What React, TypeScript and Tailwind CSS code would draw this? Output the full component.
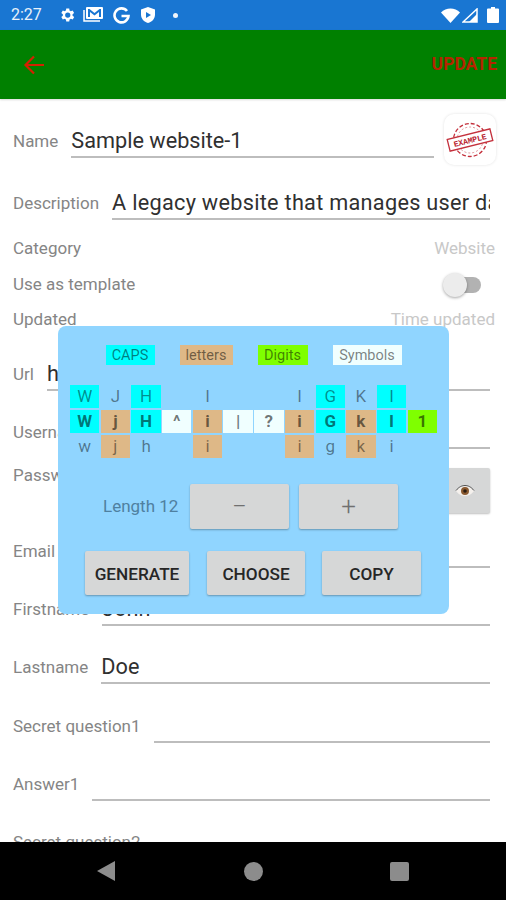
import { ReactNode } from 'react';

type CellKind = 'caps' | 'lower' | 'symbol' | 'digit' | 'none';

const cellBg: Record<CellKind, string> = {
  caps: 'bg-[#00ffff]',
  lower: 'bg-[#deb887]',
  symbol: 'bg-[#f0ffff]',
  digit: 'bg-[#7fff00]',
  none: '',
};

const topRow: [string, CellKind][] = [
  ['W', 'caps'], ['J', 'none'], ['H', 'caps'], ['', 'none'], ['I', 'none'], ['', 'none'],
  ['', 'none'], ['I', 'none'], ['G', 'caps'], ['K', 'none'], ['I', 'caps'], ['', 'none'],
];
const midRow: [string, CellKind][] = [
  ['W', 'caps'], ['j', 'lower'], ['H', 'caps'], ['^', 'symbol'], ['i', 'lower'], ['|', 'symbol'],
  ['?', 'symbol'], ['i', 'lower'], ['G', 'caps'], ['k', 'lower'], ['I', 'caps'], ['1', 'digit'],
];
const lowRow: [string, CellKind][] = [
  ['w', 'none'], ['j', 'lower'], ['h', 'none'], ['', 'none'], ['i', 'lower'], ['', 'none'],
  ['', 'none'], ['i', 'lower'], ['g', 'none'], ['k', 'lower'], ['i', 'none'], ['', 'none'],
];

function Field({ label, value, className = '', valueClass = '' }: { label: string; value?: string; className?: string; valueClass?: string }) {
  return (
    <div className={`flex h-[36px] ${className}`}>
      <span className="text-[17px] leading-[38px] text-[#858585] whitespace-nowrap">{label}</span>
      <div className={`ml-[13px] flex-1 min-w-0 overflow-hidden border-b-[2px] border-[#bdbdbd] text-[21.7px] leading-[38px] text-[#303030] whitespace-nowrap ${valueClass}`}>
        {value}
      </div>
    </div>
  );
}

function InfoRow({ label, className = '', children }: { label: string; className?: string; children: ReactNode }) {
  return (
    <div className={`flex h-[24px] items-center justify-between text-[17px] ${className}`}>
      <span className="text-[#858585]">{label}</span>
      {children}
    </div>
  );
}

function GrayButton({ label, className = '' }: { label: string; className?: string }) {
  return (
    <div className={`flex items-center justify-center rounded-[2px] bg-[#d6d7d7] shadow-[0_1px_2px_rgba(0,0,0,0.3)] ${className}`}>
      {label}
    </div>
  );
}

function StatusBar() {
  return (
    <div className="flex h-[30px] shrink-0 items-center bg-[#1976d2] text-[#e8f1fa]">
      <span className="ml-[11px] w-[47px] text-[16px]">2:27</span>
      <svg width="18" height="18" viewBox="0 0 24 24" fill="#fff">
        <path d="M19.400 13a7.500 7.500 0 0 0 0-2l2.100-1.600-2-3.500-2.500 1a7.500 7.500 0 0 0-1.700-1L15 3.200h-4l-.4 2.700a7.500 7.500 0 0 0-1.700 1l-2.500-1-2 3.500L6.500 11a7.500 7.500 0 0 0 0 2l-2.100 1.600 2 3.500 2.500-1a7.500 7.500 0 0 0 1.700 1l.4 2.700h4l.4-2.700a7.500 7.500 0 0 0 1.700-1l2.500 1 2-3.500zM13 15.500a3.500 3.500 0 1 1 0-7 3.500 3.500 0 0 1 0 7z" />
      </svg>
      <svg className="ml-[7px]" width="21" height="18" viewBox="0 0 21 18" fill="none">
        <rect x="3" y="1" width="17" height="12" rx="1" fill="#fff" />
        <path d="M5 3v8h2V6l4.500 3.500L16 6v5h2V3h-1.500L11.500 7 6.500 3z" fill="#1976d2" />
        <path d="M1 4v11h16" stroke="#fff" strokeWidth="1.500" />
      </svg>
      <svg className="ml-[9px]" width="17" height="17" viewBox="0 0 17 17" fill="none">
        <path d="M14 4a7 7 0 1 0 1.500 5H8.500" stroke="#fff" strokeWidth="2.600" />
      </svg>
      <svg className="ml-[10px]" width="16" height="18" viewBox="0 0 16 18">
        <path d="M8 1l7 2.500v5c0 4-3 7.500-7 8.500-4-1-7-4.500-7-8.500v-5z" fill="#fff" />
        <path d="M6 6l5 3-5 3z" fill="#1976d2" />
      </svg>
      <span className="ml-[17px] h-[5px] w-[5px] rounded-full bg-[#f0f5fb]" />
      <div className="ml-auto mr-[7px] flex items-center gap-[2px]">
        <svg width="19" height="15" viewBox="0 0 19 15">
          <path d="M0 4.500C2.500 2 6 .5 9.500 .5S16.500 2 19 4.500L9.500 15z" fill="#fff" />
        </svg>
        <svg width="16" height="15" viewBox="0 0 16 15" fill="none">
          <path d="M15 1v13H1z" stroke="#fff" strokeWidth="1.500" />
          <path d="M15 6v8H7z" fill="#fff" />
        </svg>
        <svg className="ml-[7px]" width="12" height="16" viewBox="0 0 12 16">
          <path d="M4 0h4v1.500h3a1 1 0 0 1 1 1V15a1 1 0 0 1-1 1H1a1 1 0 0 1-1-1V2.500a1 1 0 0 1 1-1h3z" fill="#fff" />
        </svg>
      </div>
    </div>
  );
}

function StampIcon() {
  return (
    <div className="flex h-[51px] w-[52px] shrink-0 items-center justify-center rounded-[10px] bg-white shadow-[0_0_3px_rgba(0,0,0,0.12)]">
      <svg width="48" height="40" viewBox="0 0 48 40" fill="none">
        <circle cx="24" cy="20" r="16.500" stroke="#c4303c" strokeWidth="1.300" strokeDasharray="4 2" />
        <circle cx="24" cy="20" r="13" stroke="#d87a80" strokeWidth="0.800" strokeDasharray="2 2" />
        <g transform="rotate(-14 24 20)">
          <rect x="2" y="14" width="44" height="12" fill="#fff" stroke="#c4303c" strokeWidth="1.300" />
          <text x="24" y="23" textAnchor="middle" fontSize="8" fontWeight="700" fill="#b8202c" fontFamily="Liberation Mono, monospace">
            EXAMPLE
          </text>
        </g>
      </svg>
    </div>
  );
}

function GridRow({ cells, bold = false }: { cells: [string, CellKind][]; bold?: boolean }) {
  return (
    <div className="grid h-[23px] grid-cols-12 gap-x-[1.300px]">
      {cells.map(([ch, kind], i) => (
        <div
          key={i}
          className={`flex h-[23px] items-center justify-center text-[17px] leading-[23px] ${cellBg[kind]} ${bold ? 'font-bold text-black/55' : 'text-black/45'}`}
        >
          {ch}
        </div>
      ))}
    </div>
  );
}

function PasswordPopup() {
  return (
    <div className="absolute left-[58px] top-[326px] h-[288px] w-[391px] rounded-[8px] bg-[#90d5ff] px-[12px] pt-[19px]">
      <div className="flex h-[20px] justify-center gap-[25px] text-[14.500px] leading-[21px] text-black/50">
        <span className="w-[49px] bg-[#00ffff] text-center">CAPS</span>
        <span className="w-[53px] bg-[#deb887] text-center">letters</span>
        <span className="w-[50px] bg-[#7fff00] text-center">Digits</span>
        <span className="w-[69px] bg-[#f0ffff] text-center">Symbols</span>
      </div>
      <div className="mt-[20px] flex flex-col gap-[2px]">
        <GridRow cells={topRow} />
        <GridRow cells={midRow} bold />
        <GridRow cells={lowRow} />
      </div>
      <div className="mt-[26px] flex h-[45px] items-center pl-[33px]">
        <span className="w-[87px] text-[17px] text-[#4f80a0]">Length 12</span>
        <GrayButton label="−" className="h-full w-[99px] text-[26px] font-light text-[#707070]" />
        <GrayButton label="+" className="ml-[10px] h-full w-[99px] text-[26px] font-light text-[#707070]" />
      </div>
      <div className="mt-[22px] flex h-[44px] pl-[15px] text-[17.200px] font-medium leading-[24px] text-[#262626]">
        <GrayButton label="GENERATE" className="w-[104px] pt-[2px]" />
        <GrayButton label="CHOOSE" className="ml-[18px] w-[98px] pt-[2px]" />
        <GrayButton label="COPY" className="ml-[17px] w-[99px] pt-[2px]" />
      </div>
    </div>
  );
}

export default function App() {
  return (
    <div className="relative flex h-[900px] w-[506px] flex-col overflow-hidden bg-white [font-family:Roboto,sans-serif]">
      <StatusBar />

      <header className="flex h-[69px] shrink-0 items-center justify-between bg-[#008000] pl-[23px] pr-[9px] shadow-[0_1px_2px_rgba(0,0,0,0.15)]">
        <svg width="22" height="20" viewBox="0 0 22 20" fill="none" stroke="#d42000" strokeWidth="2.200">
          <path d="M21 10H3M11 1.500L2.500 10l8.500 8.500" />
        </svg>
        <span className="text-[17.500px] font-bold text-[#b52400]">UPDATE</span>
      </header>

      <main className="flex-1 overflow-hidden pl-[13px] pr-[10px] pt-[15px]">
        <div className="flex h-[51px] items-center gap-[10px]">
          <Field label="Name" value="Sample website-1" className="flex-1" />
          <StampIcon />
        </div>
        <div className="pr-[6px]">
          <Field
            label="Description"
            value="A legacy website that manages user data and more"
            className="mt-[19px]"
            valueClass="tracking-[0.28px]"
          />
        </div>
        <InfoRow label="Category" className="mt-[17px]">
          <span className="mr-[1px] text-[#c8c8c8]">Website</span>
        </InfoRow>
        <InfoRow label="Use as template" className="mt-[12px]">
          <div className="relative mr-[15px] h-[16px] w-[34px] rounded-full bg-[#b2b2b2]">
            <div className="absolute left-[-4px] top-[-4px] h-[24px] w-[24px] rounded-full bg-[#ececec] shadow-[0_1px_3px_rgba(0,0,0,0.35)]" />
          </div>
        </InfoRow>
        <InfoRow label="Updated" className="mt-[11px]">
          <span className="mr-[1px] text-[#c8c8c8]">Time updated</span>
        </InfoRow>
        <div className="pr-[6px]">
          <Field label="Url" value="http://www.sample.com" className="mt-[23px]" />
          <Field label="Username" value="john" className="mt-[22px]" />
          <div className="mt-[7px] flex h-[57px] justify-between">
            <span className="text-[17px] leading-[38px] text-[#858585]">Password</span>
            <div className="mt-[12px] flex h-[45px] w-[60px] items-center justify-end rounded-[2px] bg-[#d6d7d7] pr-[15px] shadow-[0_1px_2px_rgba(0,0,0,0.25)]">
              <svg width="20" height="12" viewBox="0 0 20 12">
                <path d="M1 6c3-3.800 6-5 9-5s6 1.200 9 5c-3 3.800-6 5-9 5S4 9.800 1 6z" fill="#f4f0ec" />
                <circle cx="10" cy="6" r="4" fill="#8a5a30" />
                <circle cx="10" cy="6" r="1.800" fill="#2a1c10" />
                <path d="M1 5.500C4 1.800 7 .5 10 .5s6 1.300 9 5" fill="none" stroke="#444" strokeWidth="0.900" />
              </svg>
            </div>
          </div>
          <Field label="Email" value="john@example.com" className="mt-[19px]" />
          <Field label="Firstname" value="John" className="mt-[22px]" />
          <Field label="Lastname" value="Doe" className="mt-[22px]" />
          <Field label="Secret question1" className="mt-[23px]" />
          <Field label="Answer1" className="mt-[22px]" />
          <Field label="Secret question2" className="mt-[22px]" />
        </div>
      </main>

      <nav className="flex h-[58px] shrink-0 items-center bg-black pl-[97px]">
        <svg width="18" height="20" viewBox="0 0 18 20">
          <path d="M18 0v20L0 10z" fill="#8c8c8c" />
        </svg>
        <span className="ml-[129px] h-[19px] w-[19px] rounded-full bg-[#8c8c8c]" />
        <span className="ml-[127px] h-[19px] w-[19px] rounded-[2px] bg-[#8c8c8c]" />
      </nav>

      <PasswordPopup />
    </div>
  );
}
